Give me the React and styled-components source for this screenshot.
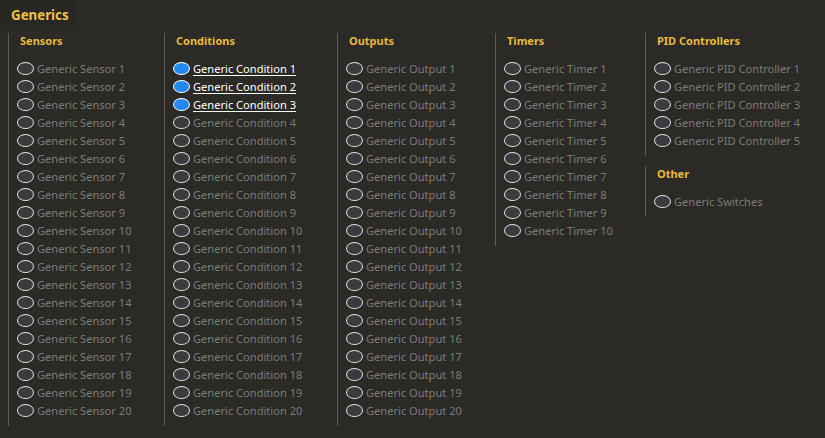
import React from 'react'
import { styled, createGlobalStyle } from 'styled-components'

const Global = createGlobalStyle`
  html, body {
    margin: 0;
    padding: 0;
    background-color: #2b2a26;
  }
  body {
    font-family: "Noto Sans", "Open Sans", sans-serif;
  }
`

const Page = styled.div`
  width: 825px;
  height: 438px;
  background-color: #2b2a26;
  overflow: hidden;
`

const Title = styled.div`
  display: inline-block;
  padding: 6px 9px 6px 11px;
  height: 18px;
  line-height: 18px;
  font-size: 13.3px;
  font-weight: bold;
  color: #f2c144;
  background-color: #282723;
`

const Columns = styled.div`
  display: flex;
  align-items: flex-start;
  padding-left: 8px;
  margin-top: 3px;
`

const Stack = styled.div`
  display: flex;
  flex-direction: column;
  gap: 10px;
  width: ${p => p.width}px;
`

const Group = styled.div`
  display: flex;
  flex-direction: column;
  width: ${p => p.width}px;
  border-left: 1px solid #5c5b57;
  padding: 0 0 7px 8px;
  box-sizing: border-box;
`

const Heading = styled.div`
  height: 16px;
  line-height: 16px;
  padding-left: 3px;
  margin-bottom: 10px;
  font-size: 11px;
  font-weight: bold;
  color: #e8b93b;
`

const Row = styled.label`
  display: flex;
  align-items: center;
  height: 18px;
  gap: 3px;
  font-size: 11.1px;
  color: ${p => (p.checked ? '#ffffff' : '#7b7b7a')};
  text-decoration: ${p => (p.checked ? 'underline' : 'none')};
  text-underline-offset: 2px;
  white-space: nowrap;
`

const Radio = styled.span`
  width: 15px;
  height: 11px;
  border: 1.5px solid ${p => (p.checked ? '#ffffff' : '#e2e2e2')};
  border-radius: 50%;
  background-color: ${p => (p.checked ? '#2388ef' : '#3a3a3f')};
  flex-shrink: 0;
`

const range = (n, label) => Array.from({ length: n }, (_, i) => `${label} ${i + 1}`)

const ItemGroup = ({ title, items, width, checked = [] }) => (
  <Group width={width}>
    <Heading>{title}</Heading>
    {items.map((item, i) => (
      <Row key={item} checked={checked.includes(i)}>
        <Radio checked={checked.includes(i)} />
        {item}
      </Row>
    ))}
  </Group>
)

const App = () => {
  return (
    <Page>
      <Global />
      <Title>Generics</Title>
      <Columns>
        <ItemGroup title="Sensors" width={156} items={range(20, 'Generic Sensor')} />
        <ItemGroup title="Conditions" width={173} items={range(20, 'Generic Condition')} checked={[0, 1, 2]} />
        <ItemGroup title="Outputs" width={158} items={range(20, 'Generic Output')} />
        <ItemGroup title="Timers" width={150} items={range(10, 'Generic Timer')} />
        <Stack width={175}>
          <ItemGroup title="PID Controllers" width={175} items={range(5, 'Generic PID Controller')} />
          <ItemGroup title="Other" width={175} items={['Generic Switches']} />
        </Stack>
      </Columns>
    </Page>
  )
}

export default App
